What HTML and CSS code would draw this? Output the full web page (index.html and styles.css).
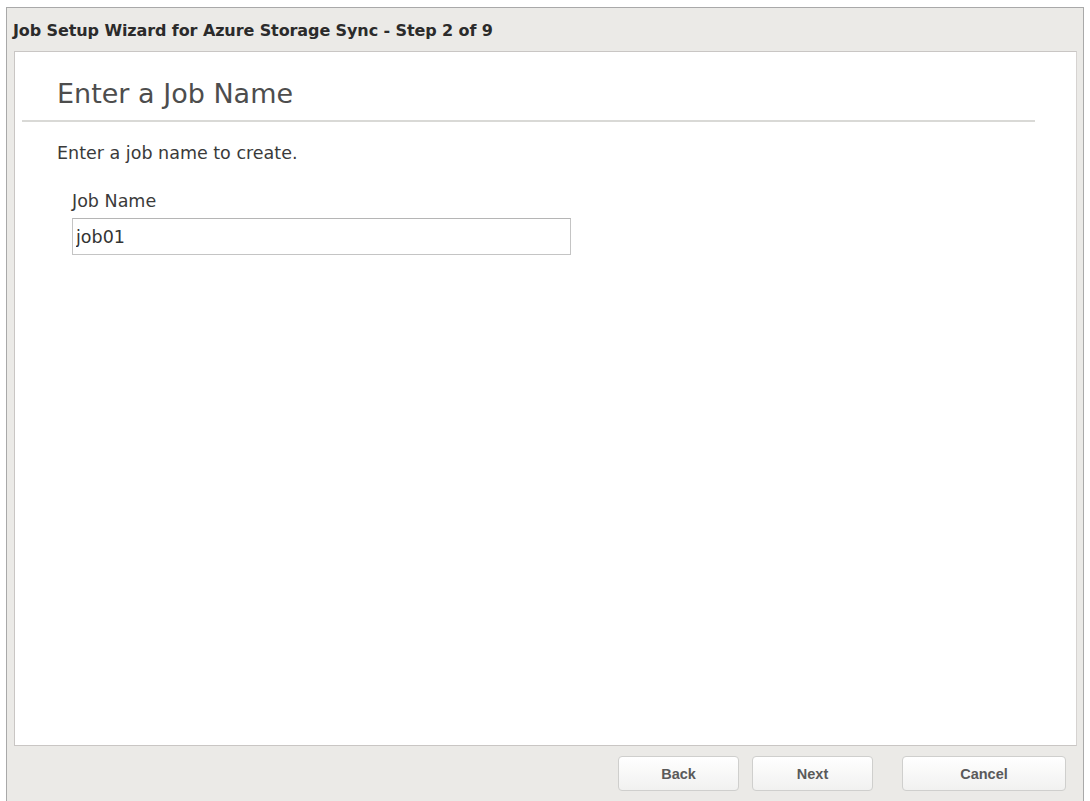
FILE: index.html
```html
<!DOCTYPE html>
<html lang="en">
<head>
    <meta charset="UTF-8">
    <meta name="viewport" content="width=device-width, initial-scale=1.0">
    <title>Job Setup Wizard</title>
    <link rel="stylesheet" href="styles.css">
</head>
<body>
    <div class="wizard">
        <div class="wizard-title">Job Setup Wizard for Azure Storage Sync - Step 2 of 9</div>
        <div class="wizard-body">
            <h1 class="step-heading">Enter a Job Name</h1>
            <p class="step-hint">Enter a job name to create.</p>
            <div class="field">
                <label for="jobName">Job Name</label>
                <input type="text" id="jobName" name="jobName" value="job01">
            </div>
        </div>
        <div class="wizard-footer">
            <button class="btn">Back</button>
            <button class="btn">Next</button>
            <button class="btn btn-cancel">Cancel</button>
        </div>
    </div>
</body>
</html>
```

FILE: styles.css
```css
body {
    margin: 0;
    background-color: #ffffff;
    font-family: "DejaVu Sans", sans-serif;
    color: #333;
}
.wizard {
    margin: 7px 6px 0 6px;
    height: 794px;
    border: 1px solid #a9a9a9;
    border-bottom: none;
    background-color: #ebeae7;
    display: flex;
    flex-direction: column;
    box-sizing: border-box;
}
.wizard-title {
    height: 43px;
    padding: 13px 0 0 6px;
    box-sizing: border-box;
    line-height: 20px;
    font-weight: bold;
    font-size: 16px;
    letter-spacing: -0.1px;
    color: #2b2b2b;
}
.wizard-body {
    flex: 1;
    margin: 0 6px 0 7px;
    background-color: #ffffff;
    border: 1px solid #c9c6c4;
    border-right-color: #d6d3d1;
}
.step-heading {
    margin: 0 41px 0 7px;
    padding: 26px 0 10px 35px;
    border-bottom: 2px solid #d9d9d6;
    font-size: 27px;
    font-weight: normal;
    color: #4d4d4d;
    line-height: 32px;
}
.step-hint {
    margin: 21px 0 0 42px;
    font-size: 17.5px;
    line-height: 20px;
    color: #3a3a3a;
}
.field {
    margin: 28px 0 0 57px;
}
.field label {
    display: block;
    font-size: 17.5px;
    line-height: 20px;
    color: #3a3a3a;
    margin-bottom: 7px;
}
.field input {
    display: block;
    width: 499px;
    height: 37px;
    margin: 0;
    padding: 0 3px;
    box-sizing: border-box;
    border: 1px solid #c4c4c4;
    border-top-color: #b5b5b5;
    font-family: inherit;
    font-size: 17.5px;
    color: #333;
}
.wizard-footer {
    height: 55px;
    display: flex;
    justify-content: flex-end;
    align-items: flex-start;
    padding: 10px 17px 0 0;
    box-sizing: border-box;
}
.btn {
    width: 121px;
    height: 35px;
    margin-left: 13px;
    border: 1px solid #cfcfcd;
    border-radius: 4px;
    background: linear-gradient(#ffffff, #f1f1f0);
    font-family: "Liberation Sans", Arial, sans-serif;
    font-weight: bold;
    font-size: 14.5px;
    color: #5a5a5a;
    cursor: pointer;
}
.btn-cancel {
    width: 164px;
    margin-left: 29px;
}
```
